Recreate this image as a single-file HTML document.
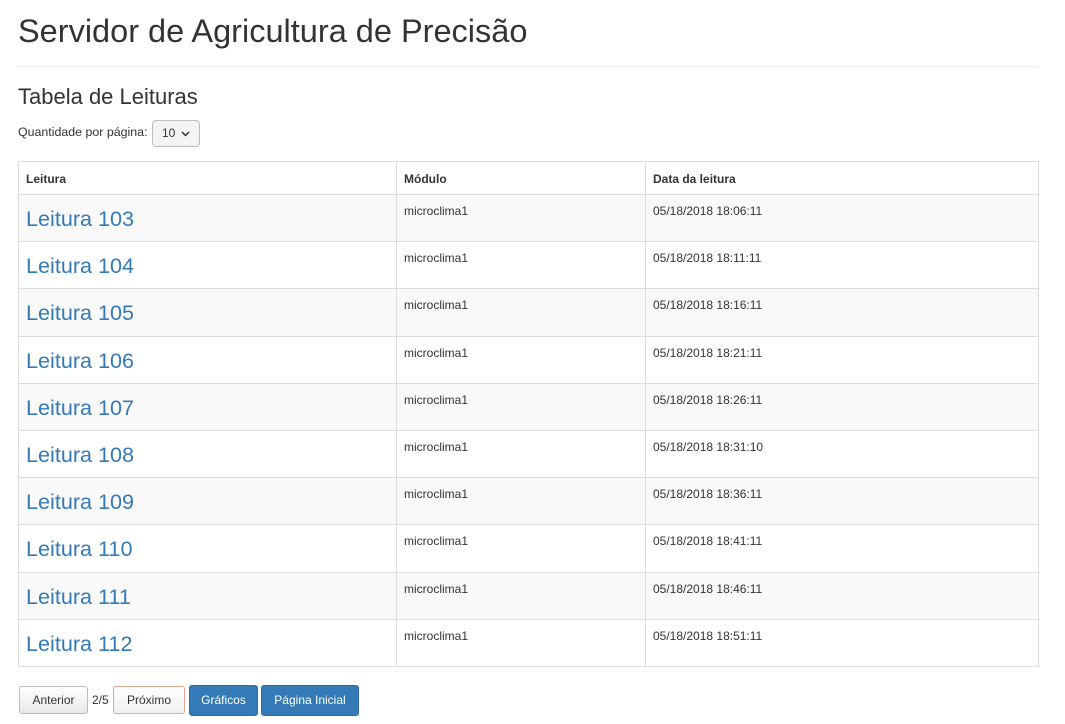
<!DOCTYPE html>
<html><head><meta charset="utf-8"><style>
*{box-sizing:border-box}
body{margin:0;background:#fff;font-family:"Liberation Sans",sans-serif;color:#333;width:1065px;height:724px;position:relative;overflow:hidden}
.a{position:absolute;white-space:nowrap}
h1{position:absolute;left:18px;top:12px;margin:0;font-size:32.5px;font-weight:400;line-height:38px}
hr{position:absolute;left:18px;top:66px;width:1021px;margin:0;border:0;border-top:1px solid #eee}
table{position:absolute;left:18px;top:161px;width:1021px;border-collapse:collapse;font-size:12px}
td,th{border:1px solid #ddd;padding:8px 7px;vertical-align:top;text-align:left}
th{height:33px;font-weight:700;padding-top:10px}
td{height:47.2px;padding-top:9px}
tr:nth-child(even) td{background:#f9f9f9}
td a{color:#337ab7;font-size:21.6px;text-decoration:none;display:block;margin-top:2px}
.btn{position:absolute;border-radius:3px;font-size:12px;text-align:center;line-height:26px}
</style></head><body>
<h1>Servidor de Agricultura de Precisão</h1>
<hr>
<div class="a" style="left:18px;top:84px;font-size:22px;line-height:26px">Tabela de Leituras</div>
<div class="a" style="left:18px;top:125px;font-size:12.4px">Quantidade por página:</div>
<div class="a" style="left:152px;top:120px;width:48px;height:27px;border:1px solid #bbb;border-radius:4px;background:#f3f3f3;font-size:12px;line-height:25px;padding-left:9px">10 <svg width="9" height="6" viewBox="0 0 9 6" style="margin-left:2px"><path d="M1 1l3.5 3.5L8 1" fill="none" stroke="#333" stroke-width="1.5"/></svg></div>
<table>
<colgroup><col style="width:378px"><col style="width:249px"><col></colgroup>
<tr><th>Leitura</th><th>Módulo</th><th>Data da leitura</th></tr>
<tr><td><a>Leitura 103</a></td><td>microclima1</td><td>05/18/2018 18:06:11</td></tr>
<tr><td><a>Leitura 104</a></td><td>microclima1</td><td>05/18/2018 18:11:11</td></tr>
<tr><td><a>Leitura 105</a></td><td>microclima1</td><td>05/18/2018 18:16:11</td></tr>
<tr><td><a>Leitura 106</a></td><td>microclima1</td><td>05/18/2018 18:21:11</td></tr>
<tr><td><a>Leitura 107</a></td><td>microclima1</td><td>05/18/2018 18:26:11</td></tr>
<tr><td><a>Leitura 108</a></td><td>microclima1</td><td>05/18/2018 18:31:10</td></tr>
<tr><td><a>Leitura 109</a></td><td>microclima1</td><td>05/18/2018 18:36:11</td></tr>
<tr><td><a>Leitura 110</a></td><td>microclima1</td><td>05/18/2018 18:41:11</td></tr>
<tr><td><a>Leitura 111</a></td><td>microclima1</td><td>05/18/2018 18:46:11</td></tr>
<tr><td><a>Leitura 112</a></td><td>microclima1</td><td>05/18/2018 18:51:11</td></tr>
</table>
<div class="btn" style="left:19px;top:686px;width:69px;height:28px;border:1px solid #bbb;background:linear-gradient(#fff,#e8e8e8)">Anterior</div>
<div class="a" style="left:92px;top:693px;font-size:12px">2/5</div>
<div class="btn" style="left:113px;top:686px;width:72px;height:28px;border:1px solid #e0a890;background:linear-gradient(#fff,#f0f0f0)">Próximo</div>
<div class="btn" style="left:189px;top:685px;width:69px;height:31px;background:#337ab7;color:#fff;border:1px solid #2e6da4;line-height:29px">Gráficos</div>
<div class="btn" style="left:261px;top:685px;width:98px;height:31px;background:#337ab7;color:#fff;border:1px solid #2e6da4;line-height:29px">Página Inicial</div>
</body></html>
